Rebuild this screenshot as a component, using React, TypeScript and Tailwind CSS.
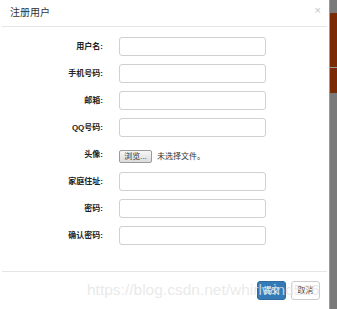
import React from 'react'

const fields = [
    { label: '用户名:', type: 'text' },
    { label: '手机号码:', type: 'text' },
    { label: '邮箱:', type: 'text' },
    { label: 'QQ号码:', type: 'text' },
    { label: '头像:', type: 'file' },
    { label: '家庭住址:', type: 'text' },
    { label: '密码:', type: 'text' },
    { label: '确认密码:', type: 'text' },
]

const font = { fontFamily: '"Liberation Sans", "Noto Sans CJK SC", sans-serif' }

const App: React.FC = () => {
    return (
        <div className="relative flex w-[337px] h-[309px] bg-white overflow-hidden text-[#333]" style={font}>
            {/* dialog */}
            <div className="w-[329px] flex flex-col">
                <div className="h-[27px] mx-[2px] flex items-center justify-between border-b border-[#e5e5e5] pl-[8px] pr-[6px]">
                    <span className="text-[10px] leading-none">注册用户</span>
                    <span className="text-[11px] leading-none text-[#c4c4c4] mb-[6px]">×</span>
                </div>

                <div className="flex flex-col gap-[8px] pt-[10px] h-[245px] mx-[2px] border-b border-[#e5e5e5]">
                    {fields.map((f, i) => (
                        <div key={i} className="flex items-center h-[19px]">
                            <label className="w-[101px] text-right text-[8px] font-bold leading-none text-[#222]">{f.label}</label>
                            {f.type === 'file' ? (
                                <div className="ml-[16px] mt-[4px] flex items-center gap-[5px]">
                                    <span className="h-[13px] w-[33px] flex items-center justify-center border border-[#9a9a9a] rounded-[2px] bg-gradient-to-b from-[#f6f6f6] to-[#dcdcdc] text-[8px] leading-none">浏览...</span>
                                    <span className="text-[8px] leading-none">未选择文件。</span>
                                </div>
                            ) : (
                                <div className="ml-[16px] w-[147px] h-[19px] border border-[#d0d0d0] rounded-[3px]" />
                            )}
                        </div>
                    ))}
                </div>

                <div className="flex justify-end gap-[5px] pt-[9px] pr-[9px]">
                    <span className="w-[29px] h-[19px] flex items-center justify-center rounded-[3px] bg-[#337ab7] border border-[#2e6da4] text-white text-[8px] leading-none">提交</span>
                    <span className="w-[29px] h-[19px] flex items-center justify-center rounded-[3px] bg-white border border-[#cccccc] text-[8px] leading-none">取消</span>
                </div>
            </div>

            {/* page scrollbar behind */}
            <div className="w-[8px] flex flex-col border-l border-[#9a9a9a] bg-[#7a7a7a]">
                <div className="h-[13px]" />
                <div className="h-[54px] bg-[#7b2a06]" />
                <div className="h-[1px] bg-[#9a9a9a]" />
                <div className="h-[25px] bg-[#7b2a06]" />
            </div>

            {/* watermark */}
            <span className="absolute left-[87px] top-[282px] text-[15.5px] leading-none text-[#e4e4e4]/80 whitespace-nowrap pointer-events-none" style={{ fontFamily: '"Liberation Sans", sans-serif' }}>
                https://blog.csdn.net/whirlwind526
            </span>
        </div>
    )
}

export default App
